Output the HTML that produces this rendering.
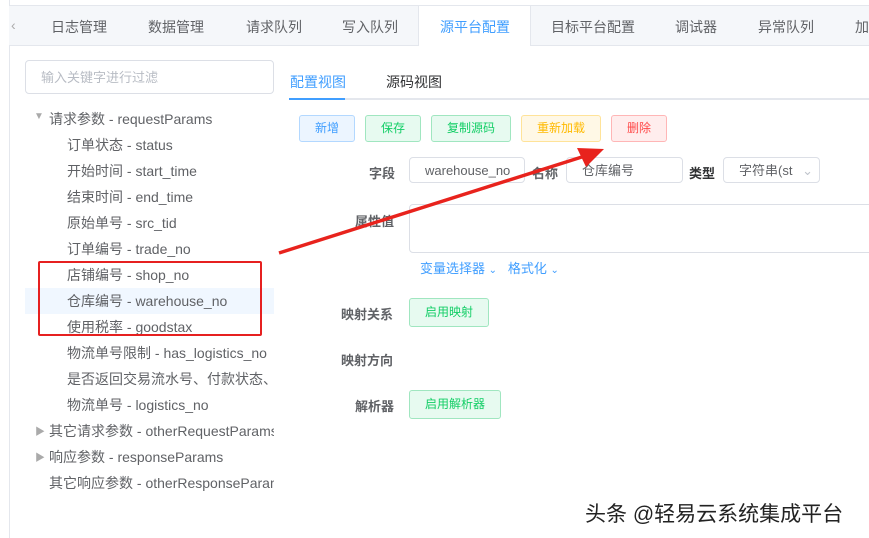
<!DOCTYPE html>
<html><head><meta charset="utf-8"><style>
body{margin:0;width:869px;height:538px;overflow:hidden;background:#fff;font-family:"Liberation Sans","Noto Sans CJK SC",sans-serif;position:relative}
.a{position:absolute;white-space:nowrap}
.tabs{position:absolute;left:9px;top:5px;width:860px;height:39px;background:#f5f7fa;border-top:1px solid #e4e7ed;border-bottom:1px solid #e4e7ed}
.tab{position:absolute;top:13px;font-size:14px;color:#606266;white-space:nowrap}
.btn{position:absolute;top:115px;height:25px;border:1px solid;border-radius:3px;font-size:12px;line-height:25px;text-align:center;white-space:nowrap}
.tr{position:absolute;font-size:14px;color:#606266;white-space:nowrap}
.inp{position:absolute;border:1px solid #dcdfe6;border-radius:4px;background:#fff;font-size:13px;color:#606266;white-space:nowrap;overflow:hidden}
.lbl{position:absolute;font-size:13px;color:#606266;font-weight:bold;white-space:nowrap}
</style></head><body>
<div class="a" style="left:9px;top:0;bottom:0;border-left:1px solid #e4e7ed"></div>
<div class="tabs"></div>
<div class="a" style="left:418px;top:5px;width:111px;height:40px;background:#fff;border-left:1px solid #e4e7ed;border-right:1px solid #e4e7ed;border-top:1px solid #e4e7ed"></div>
<div class="tab" style="left:11px;top:17px;color:#aaa">‹</div>
<div class="tab" style="left:51px;top:17px">日志管理</div>
<div class="tab" style="left:148px;top:17px">数据管理</div>
<div class="tab" style="left:246px;top:17px">请求队列</div>
<div class="tab" style="left:342px;top:17px">写入队列</div>
<div class="tab" style="left:440px;top:17px;color:#409eff">源平台配置</div>
<div class="tab" style="left:551px;top:17px">目标平台配置</div>
<div class="tab" style="left:675px;top:17px">调试器</div>
<div class="tab" style="left:758px;top:17px">异常队列</div>
<div class="tab" style="left:855px;top:17px">加</div>
<div class="inp" style="left:25px;top:60px;height:34px;line-height:34px;color:#b8bcc4;padding-left:15px;box-sizing:border-box;width:249px">输入关键字进行过滤</div>
<div class="a" style="left:290px;top:72px;font-size:14px;color:#409eff">配置视图</div>
<div class="a" style="left:386px;top:72px;font-size:14px;color:#303133">源码视图</div>
<div class="a" style="left:289px;top:98px;width:580px;height:2px;background:#e4e7ed"></div>
<div class="a" style="left:289px;top:98px;width:56px;height:2px;background:#409eff"></div>
<div class="btn" style="left:299px;width:54px;background:#ecf5ff;border-color:#b3d8ff;color:#409eff">新增</div>
<div class="btn" style="left:365px;width:54px;background:#e7faf0;border-color:#a0e6c0;color:#13ce66">保存</div>
<div class="btn" style="left:431px;width:78px;background:#e7faf0;border-color:#a0e6c0;color:#13ce66">复制源码</div>
<div class="btn" style="left:521px;width:78px;background:#fff8e6;border-color:#ffe399;color:#ffba00">重新加载</div>
<div class="btn" style="left:611px;width:54px;background:#ffeded;border-color:#ffb6b6;color:#ff4949">删除</div>
<div class="lbl" style="left:369px;top:163px">字段</div>
<div class="inp" style="left:409px;top:157px;width:116px;height:26px;line-height:26px;padding-left:15px;box-sizing:border-box">warehouse_no</div>
<div class="lbl" style="left:532px;top:163px">名称</div>
<div class="inp" style="left:566px;top:157px;width:117px;height:26px;line-height:26px;padding-left:15px;box-sizing:border-box">仓库编号</div>
<div class="lbl" style="left:689px;top:163px;color:#303133">类型</div>
<div class="inp" style="left:723px;top:157px;width:97px;height:26px;line-height:26px;padding-left:15px;box-sizing:border-box">字符串(st <span style="color:#c0c4cc;margin-left:6px">⌄</span></div>
<div class="lbl" style="left:355px;top:211px">属性值</div>
<div class="inp" style="left:409px;top:204px;width:470px;height:47px"></div>
<div class="a" style="left:420px;top:258px;font-size:13px;color:#409eff">变量选择器 <span style="font-size:10px">⌄</span>&nbsp;&nbsp; 格式化 <span style="font-size:10px">⌄</span></div>
<div class="lbl" style="left:341px;top:304px">映射关系</div>
<div class="btn" style="left:409px;top:298px;width:78px;height:27px;line-height:27px;background:#e7faf0;border-color:#a0e6c0;color:#13ce66">启用映射</div>
<div class="lbl" style="left:341px;top:350px">映射方向</div>
<div class="lbl" style="left:355px;top:396px">解析器</div>
<div class="btn" style="left:409px;top:390px;width:90px;height:27px;line-height:27px;background:#e7faf0;border-color:#a0e6c0;color:#13ce66">启用解析器</div>
<div class="a" style="left:25px;top:288px;width:249px;height:26px;background:#f0f7ff"></div>
<div class="tr" style="left:34px;top:111px;font-size:10px;color:#aaa">▼</div>
<div class="tr" style="left:49px;top:109px">请求参数 - requestParams</div>
<div class="tr" style="left:67px;top:135px">订单状态 - status</div>
<div class="tr" style="left:67px;top:161px">开始时间 - start_time</div>
<div class="tr" style="left:67px;top:187px">结束时间 - end_time</div>
<div class="tr" style="left:67px;top:213px">原始单号 - src_tid</div>
<div class="tr" style="left:67px;top:239px">订单编号 - trade_no</div>
<div class="tr" style="left:67px;top:265px">店铺编号 - shop_no</div>
<div class="tr" style="left:67px;top:291px">仓库编号 - warehouse_no</div>
<div class="tr" style="left:67px;top:317px">使用税率 - goodstax</div>
<div class="tr" style="left:67px;top:343px">物流单号限制 - has_logistics_no</div>
<div class="tr" style="left:67px;top:369px;width:207px;overflow:hidden">是否返回交易流水号、付款状态、</div>
<div class="tr" style="left:67px;top:395px">物流单号 - logistics_no</div>
<div class="tr" style="left:35px;top:423px;font-size:10px;color:#aaa">▶</div>
<div class="tr" style="left:49px;top:421px;width:225px;overflow:hidden">其它请求参数 - otherRequestParams</div>
<div class="tr" style="left:35px;top:449px;font-size:10px;color:#aaa">▶</div>
<div class="tr" style="left:49px;top:447px">响应参数 - responseParams</div>
<div class="tr" style="left:49px;top:473px;width:225px;overflow:hidden">其它响应参数 - otherResponseParams</div>
<div class="a" style="left:38px;top:261px;width:220px;height:71px;border:2px solid #e62020;border-radius:2px"></div>
<svg class="a" style="left:0;top:0" width="869" height="538"><line x1="279" y1="253" x2="585" y2="156" stroke="#e8231d" stroke-width="3.5"/><polygon points="604,149 577,148 586,167" fill="#e8231d"/></svg>
<div class="a" style="left:585px;top:498px;font-size:21px;color:#222;text-shadow:0 0 2px #fff,0 0 2px #fff">头条 @轻易云系统集成平台</div>
</body></html>
